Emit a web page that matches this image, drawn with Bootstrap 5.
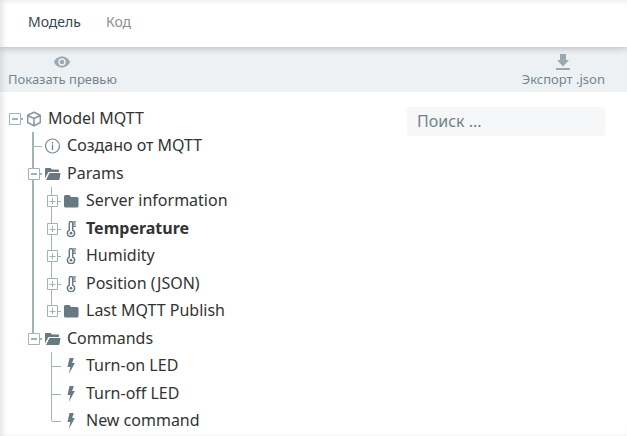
<!DOCTYPE html>
<html lang="ru">
<head>
<meta charset="utf-8">
<meta name="viewport" content="width=device-width, initial-scale=1">
<title>Model MQTT</title>
<link href="https://cdn.jsdelivr.net/npm/bootstrap@5.3.0/dist/css/bootstrap.min.css" rel="stylesheet">
<style>
  :root { --line: #a3b2b5; --icon: #677a81; --soft: #9aa8b0; }
  body { font-family: "Noto Sans", "Open Sans", sans-serif; color: #333; background: #fff; }
  .page-frame { overflow: hidden; height: 100vh; }
  /* soft inner shade along the panel edges */
  .page-frame::after { content: ""; position: absolute; inset: 0; pointer-events: none; box-shadow: inset 3px 1px 6px -1px rgba(0,0,0,.12); z-index: 5; }
  .tabs-bar { height: 47px; padding: 0 28px; gap: 25px; box-shadow: 0 1px 7px rgba(0,0,0,.25); z-index: 2; }
  .tabs-bar .nav-link { padding: 0 0 3px; font-size: 14px; line-height: 20px; color: #8e8e8e; }
  .tabs-bar .nav-link.active { color: #37474f; }
  .tool-bar { height: 45px; padding: 0 22px 0 8px; background: #edf1f4; }
  .tool-btn { font-size: 13px; line-height: 18px; color: #72858f; padding: 5px 0 0; border: 0; background: none; }
  .tool-btn svg { height: 18px; fill: var(--soft); }
  .work-area { padding: 13px 22px 0 9px; }
  .search-box { width: 198px; height: 29px; margin-top: 2px; padding: 0 10px 1px; border: 0; border-radius: 3px; background: #f5f7f9; font-size: 16px; color: #546e7a; }
  .search-box::placeholder { color: #72828a; }
  .tree-root, .tree-root ul { list-style: none; margin: 0; padding: 0; }
  .tree-root ul { padding-left: 19px; }
  .tree-root ul > li { background: linear-gradient(var(--line), var(--line)) 4px 0 / 2px 100% no-repeat; }
  .tree-root ul > li:last-child { background-size: 2px 14px; }
  .tree-root ul ul > li { background-size: 1px 100%; }
  .tree-root ul ul > li:last-child { background-size: 1px 14px; }
  .tree-line { height: 27px; font-size: 16px; line-height: 27px; white-space: nowrap; }
  li:nth-child(odd) > .tree-line:not(.opened) { height: 28px; padding-bottom: 1px; }
  .tree-line .glyph { width: 16px; height: 16px; margin: 1px 4px 0 0; flex: none; }
  .joint { width: 17px; height: 13px; padding: 0; border: 0; background: none; flex: none; display: flex; margin-top: 2px; }
  .joint svg { width: 17px; height: 12px; display: block; overflow: visible; }
  .tree-label { padding-left: 2px; }
</style>
<script src="https://cdn.jsdelivr.net/npm/bootstrap@5.3.0/dist/js/bootstrap.bundle.min.js"></script>
</head>
<body>
<svg width="0" height="0" class="position-absolute" aria-hidden="true">
  <symbol id="minus" viewBox="0 0 17 12"><path d="M.5.5h11v11H.5z" fill="#fff" stroke="#a3b2b5"/><path d="M3 6h6M12 6h2" stroke="#a3b2b5" stroke-width="2"/></symbol>
  <symbol id="plus" viewBox="0 0 17 12"><path d="M.5.5h10v11H.5z" fill="#fff" stroke="#a3b2b5"/><path d="M2.500 6.500h6M5.500 3v6" stroke="#a3b2b5"/><path d="M11 6.500h3" stroke="#a3b2b5"/></symbol>
  <symbol id="leaf" viewBox="0 0 17 12"><path d="M5 6.500h9" stroke="#a3b2b5"/></symbol>
  <symbol id="cube" viewBox="0 0 16 16"><path d="M8 1.200 14.300 4.200v7.300L8 14.800 1.700 11.500V4.200zM1.700 4.500 8 7.500l6.300-3M8 7.500v7" fill="none" stroke="#8697a0" stroke-width="1.500" stroke-linejoin="round"/></symbol>
  <symbol id="info" viewBox="0 0 16 16"><circle cx="7.500" cy="8" r="7" fill="none" stroke="#788b93" stroke-width="1.200"/><path d="M7.500 4v1.500M7.500 6.500V12" stroke="#677a81" stroke-width="1.200"/></symbol>
  <symbol id="opened" viewBox="0 0 16 16"><path d="M0 12.500V3q0-1 1-1h4.500l1.500 1.500h6q1 0 1 1V6H4.200q-.9 0-1.300.9z" fill="#677a81"/><path d="M4.500 7H15.500L14.500 13q-.1 1-1 1H1z" fill="#677a81"/></symbol>
  <symbol id="folder" viewBox="0 0 16 16"><path d="M0 3.500Q0 2 1.500 2H5.500L7 4h6q1.500 0 1.500 1.500v7.500q0 1.500-1.500 1.500h-11.500Q0 14.500 0 13z" fill="#677a81"/></symbol>
  <symbol id="thermo" viewBox="0 0 16 16"><path d="M5.300 9V2.500q0-2 1.700-2t1.700 2V9a3.600 3.600 0 1 1-3.400 0z" fill="none" stroke="#677a81" stroke-width="1.500"/><circle cx="7" cy="12.200" r="1.400" fill="#677a81"/><path d="M8.500 1h3.500M9 3h2.500M9 5.200h3" stroke="#788b93" stroke-width="1.400"/></symbol>
  <symbol id="bolt" viewBox="0 0 16 16"><path d="M5.500 0H9.800L8.200 5h2.700L4.800 16l1.600-7H3.500z" fill="#677a81"/></symbol>
</svg>
<div class="page-frame position-relative">
  <nav class="tabs-bar nav bg-white position-relative d-flex align-items-center">
    <a class="nav-link active" href="#model">Модель</a>
    <a class="nav-link" href="#code">Код</a>
  </nav>
  <div class="tool-bar d-flex justify-content-between align-items-start">
    <button type="button" class="tool-btn d-flex flex-column align-items-center"><svg width="16" viewBox="0 0 16 18"><path fill-rule="evenodd" d="M8 4.500c3.600 0 6.700 2.300 8 5.500-1.300 3.200-4.400 5.500-8 5.500S1.300 13.200 0 10C1.300 6.800 4.400 4.500 8 4.500zM8 6.300a3.700 3.700 0 1 0 0 7.400 3.700 3.700 0 0 0 0-7.400zM8 7.800a2.200 2.200 0 1 1 0 4.400 2.200 2.200 0 0 1 0-4.400z"/></svg>Показать превью</button>
    <button type="button" class="tool-btn d-flex flex-column align-items-center"><svg width="14" viewBox="0 0 14 18"><path d="M4 2h6v6h3L7 14.500 1 8h3zM0 16h14v2H0z"/></svg>Экспорт .json</button>
  </div>
  <main class="work-area d-flex align-items-start justify-content-between">
    <ul class="tree-root flex-grow-1">
      <li>
        <div class="tree-line opened d-flex align-items-center"><button class="joint" type="button" aria-label="Свернуть Model MQTT"><svg><use href="#minus"/></svg></button><svg class="glyph"><use href="#cube"/></svg><span class="tree-label">Model MQTT</span></div>
        <ul>
          <li><div class="tree-line d-flex align-items-center"><span class="joint"><svg><use href="#leaf"/></svg></span><svg class="glyph"><use href="#info"/></svg><span class="tree-label">Создано от MQTT</span></div></li>
          <li>
            <div class="tree-line opened d-flex align-items-center"><button class="joint" type="button" aria-label="Свернуть Params"><svg><use href="#minus"/></svg></button><svg class="glyph"><use href="#opened"/></svg><span class="tree-label">Params</span></div>
            <ul>
              <li><div class="tree-line d-flex align-items-center"><button class="joint" type="button" aria-label="Развернуть Server information"><svg><use href="#plus"/></svg></button><svg class="glyph"><use href="#folder"/></svg><span class="tree-label">Server information</span></div></li>
              <li><div class="tree-line d-flex align-items-center fw-bold"><button class="joint" type="button" aria-label="Развернуть Temperature"><svg><use href="#plus"/></svg></button><svg class="glyph"><use href="#thermo"/></svg><span class="tree-label">Temperature</span></div></li>
              <li><div class="tree-line d-flex align-items-center"><button class="joint" type="button" aria-label="Развернуть Humidity"><svg><use href="#plus"/></svg></button><svg class="glyph"><use href="#thermo"/></svg><span class="tree-label">Humidity</span></div></li>
              <li><div class="tree-line d-flex align-items-center"><button class="joint" type="button" aria-label="Развернуть Position (JSON)"><svg><use href="#plus"/></svg></button><svg class="glyph"><use href="#thermo"/></svg><span class="tree-label">Position (JSON)</span></div></li>
              <li><div class="tree-line d-flex align-items-center"><button class="joint" type="button" aria-label="Развернуть Last MQTT Publish"><svg><use href="#plus"/></svg></button><svg class="glyph"><use href="#folder"/></svg><span class="tree-label">Last MQTT Publish</span></div></li>
            </ul>
          </li>
          <li>
            <div class="tree-line opened d-flex align-items-center"><button class="joint" type="button" aria-label="Свернуть Commands"><svg><use href="#minus"/></svg></button><svg class="glyph"><use href="#opened"/></svg><span class="tree-label">Commands</span></div>
            <ul>
              <li><div class="tree-line d-flex align-items-center"><span class="joint"><svg><use href="#leaf"/></svg></span><svg class="glyph"><use href="#bolt"/></svg><span class="tree-label">Turn-on LED</span></div></li>
              <li><div class="tree-line d-flex align-items-center"><span class="joint"><svg><use href="#leaf"/></svg></span><svg class="glyph"><use href="#bolt"/></svg><span class="tree-label">Turn-off LED</span></div></li>
              <li><div class="tree-line d-flex align-items-center"><span class="joint"><svg><use href="#leaf"/></svg></span><svg class="glyph"><use href="#bolt"/></svg><span class="tree-label">New command</span></div></li>
            </ul>
          </li>
        </ul>
      </li>
    </ul>
    <input class="search-box" type="search" aria-label="Поиск" placeholder="Поиск ...">
  </main>
</div>
</body>
</html>
